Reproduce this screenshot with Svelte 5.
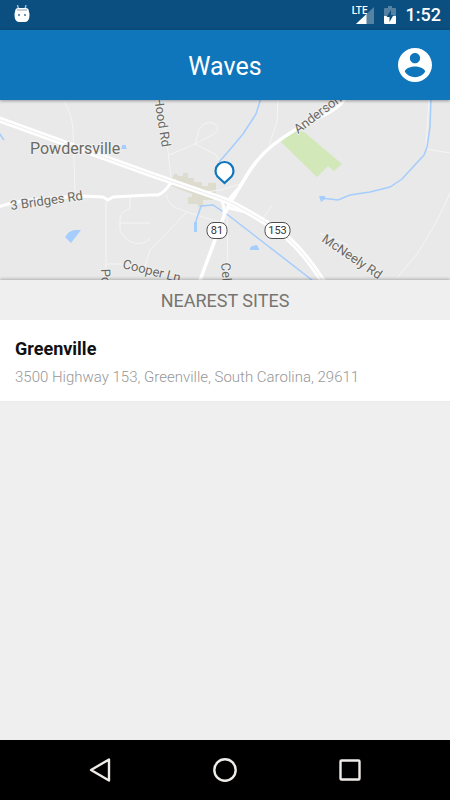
<script>
  const title = 'Waves';
  const sites = [
    { name: 'Greenville', address: '3500 Highway 153, Greenville, South Carolina, 29611' }
  ];
</script>

<div class="screen">
  <div class="status">
    <svg class="droid" width="16" height="18" viewBox="0 0 16 18" aria-hidden="true">
      <path d="M3.500 0 4.500 4M12 0 11 4" stroke="#a9c0d3" stroke-width="1.400" />
      <path d="M1.500 4.500Q2 3 4 3H12Q14 3 14.500 4.500L15.500 9Q15.500 14 14 15.500Q13 17 10 17H6Q3 17 2 15.500Q.5 14 .5 9Z" fill="#fff" />
      <path d="M3 4H13V6H3Z" fill="#c3d0dc" />
      <rect x="4" y="9" width="2" height="2" fill="#6f93b2" />
      <rect x="10" y="9" width="2" height="2" fill="#6f93b2" />
    </svg>
    <div class="indicators">
      <div class="signal">
        <span class="lte">LTE</span>
        <svg width="18" height="17" viewBox="0 0 18 17" aria-hidden="true">
          <path d="M18 0V17H0Z" fill="#5581a3" />
          <path d="M10.500 7.100V17H0Z" fill="#fff" />
        </svg>
      </div>
      <svg width="12" height="18" viewBox="0 0 12 18" aria-hidden="true">
        <path d="M4 0H8V2H11Q12 2 12 3V17Q12 18 11 18H1Q0 18 0 17V3Q0 2 1 2H4Z" fill="#5581a3" />
        <path d="M0 10H12V17Q12 18 11 18H1Q0 18 0 17Z" fill="#fff" />
        <path d="M7 4 2.500 11H5.500V16L9.500 9H7Z" fill="#0a4f7f" />
      </svg>
      <span class="time">1:52</span>
    </div>
  </div>

  <header>
    <h1>{title}</h1>
    <button class="account" aria-label="Account">
      <svg width="34" height="34" viewBox="2 2 20 20" aria-hidden="true">
        <path fill="#fff" d="M12 2C6.480 2 2 6.480 2 12s4.480 10 10 10 10-4.480 10-10S17.520 2 12 2zm0 3c1.660 0 3 1.340 3 3s-1.340 3-3 3-3-1.340-3-3 1.340-3 3-3zm0 14.200c-2.500 0-4.710-1.280-6-3.220.03-1.990 4-3.080 6-3.080 1.990 0 5.970 1.090 6 3.080-1.290 1.940-3.500 3.220-6 3.220z" />
      </svg>
    </button>
  </header>

  <div class="map">
    <svg viewBox="0 0 450 180" preserveAspectRatio="xMidYMid slice" role="img" aria-label="Map of Powdersville">
      <path fill="#d2e8b8" d="M281 42 294 29 304 32 342 64 334 71 328 66 317 77Z" />
      <path fill="#dedbcf" d="M174 74H178V76H183V73H188V78H194V82H202V86H208V83H216V93H213V100H203V107H198V104H188V97H192V94L172 86V82H176V79H172Z" />

      <g class="minor">
        <path d="M64 1Q72 14 73 30L75 92" />
        <path d="M106 101V165L103 180M106 164H128M130 97V109Q122 110 120 118V130Q124 140 134 143Q145 145 150 138M120 123H150M150 150 144 170" />
        <path d="M162 10 166 35 171 77M169 55 195 44 199 30Q203 21 213 23Q222 27 214 34L195 44 215 54 219 60" />
        <path d="M278 0 277 22 269 45M205 92 221 90 240 84M166 94Q168 103 174 107L187 112 222 123M150 150 187 112M227 105 228 180M263 118 272 106" />
        <path d="M429 0 427 30 426 49 450 53M450 93Q438 122 417 154L397 178M320 133 348 145" />
      </g>

      <g class="water">
        <path d="M261 -2 256 14 243 34 227 53 219 62" />
        <path d="M196 129 196 121 201 106 213 105 228 115 312 180" />
        <path d="M431 -2 430 27 427 47 424 55 402 79 390 87 370 92 350 95 338 100 321 98" />
        <path d="M-1 33 4 40" />
      </g>
      <path fill="#a5cdfd" d="M65 137 69 132 74 130H81L71 143ZM122 47V45H126V48H127V49H121V48ZM194 122H197V132H194ZM250 148 252 146 257 145 259 149V150H250ZM319 96H325V99L321 102 320 99Z" />

      <g class="road">
        <path stroke-width="3" d="M-2 107Q15 101 40 99T82 96L103 97 108 100 113 97 150 95 158 95Q164 93 170 84" />
        <path stroke-width="3.500" d="M199 183 225 113 230 103 247 75Q258 57 273 45Q292 30 318 18T345 -4" />
        <path stroke-width="6" d="M-2 19 150 74 222 99Q236 104 273 127Q298 142 324 183" />
        <path stroke-width="3" d="M221 99Q225 108 224 113M229 108 246 112M230 98 237 90" />
      </g>
      <path fill="none" stroke="#ececec" stroke-width="1" d="M-2 19 150 74 222 99Q236 104 273 127Q298 142 324 183" />

      <g class="label">
        <text class="town" x="30" y="54">Powdersville</text>
        <text transform="translate(11 110) rotate(-8)">3 Bridges Rd</text>
        <text transform="translate(154 -2) rotate(81)">Hood Rd</text>
        <text transform="translate(298 34) rotate(-37)">Anderson</text>
        <text transform="translate(321 141) rotate(34)">McNeely Rd</text>
        <text transform="translate(122 168) rotate(14)">Cooper Ln</text>
        <text transform="translate(101 169) rotate(88)">Po</text>
        <text transform="translate(221 163) rotate(85)">Cel</text>
      </g>

      <g class="shield">
        <rect x="207" y="122.500" width="20" height="16" rx="7" />
        <text x="217" y="134">81</text>
        <rect x="265" y="122.500" width="25" height="16" rx="7" />
        <text x="277.500" y="134">153</text>
      </g>

      <path fill="#fff" stroke="#0f76bc" stroke-width="2.200" d="M224.500 83 217.500 76.500Q215.500 74 215.500 71A9 9 0 0 1 233.500 71Q233.500 74 231.500 76.500Z" />
    </svg>
  </div>

  <main>
    <h2>NEAREST SITES</h2>
    <ul>
      {#each sites as site}
        <li>
          <strong>{site.name}</strong>
          <span>{site.address}</span>
        </li>
      {/each}
    </ul>
  </main>

  <nav aria-label="System navigation">
    <button aria-label="Back">
      <svg width="26" height="26" viewBox="0 0 26 26" aria-hidden="true"><path d="M22 2.500V23.500L4 13Z" /></svg>
    </button>
    <button aria-label="Home">
      <svg width="26" height="26" viewBox="0 0 26 26" aria-hidden="true"><circle cx="13" cy="13" r="10.700" /></svg>
    </button>
    <button aria-label="Recent apps">
      <svg width="26" height="26" viewBox="0 0 26 26" aria-hidden="true"><rect x="3.500" y="3.500" width="19" height="19" rx="1" /></svg>
    </button>
  </nav>
</div>

<style>
  :global(body) {
    margin: 0;
  }

  .screen {
    display: flex;
    flex-direction: column;
    min-height: 100vh;
    background: #efefef;
    font-family: Roboto, "Liberation Sans", sans-serif;
  }

  button {
    display: flex;
    align-items: center;
    justify-content: center;
    padding: 0;
    border: 0;
    background: none;
    cursor: pointer;
  }

  .status {
    display: flex;
    align-items: center;
    justify-content: space-between;
    height: 30px;
    padding: 0 9px 0 14px;
    background: #0a4f7f;
    color: #fff;
  }

  .droid {
    margin-bottom: 2px;
    fill: none;
  }

  .indicators {
    display: flex;
    align-items: center;
    gap: 10px;
  }

  .signal {
    display: flex;
    align-items: flex-start;
  }

  .signal svg {
    margin-left: -12px;
  }

  .lte {
    font-size: 10px;
    line-height: 8px;
    font-weight: 500;
  }

  .time {
    font-size: 18px;
    line-height: 30px;
    font-weight: 500;
  }

  header {
    position: relative;
    z-index: 1;
    display: grid;
    grid-template-columns: 34px 1fr 34px;
    align-items: center;
    height: 70px;
    padding: 0 18px;
    background: #0f76bc;
    box-shadow: 0 1px 3px rgba(0, 0, 0, 0.35);
  }

  h1 {
    grid-column: 2;
    margin: 0;
    padding-top: 4px;
    color: #fff;
    font-size: 25px;
    line-height: 32px;
    font-weight: 400;
    text-align: center;
  }

  .map {
    height: 180px;
    background: #e9e9e9;
    overflow: hidden;
  }

  .map svg {
    display: block;
    width: 100%;
    height: 100%;
  }

  .minor path {
    fill: none;
    stroke: #f5f5f5;
    stroke-width: 1;
  }

  .water path {
    fill: none;
    stroke: #a5cdfd;
    stroke-width: 1.5;
  }

  .road path {
    fill: none;
    stroke: #fff;
    stroke-linecap: round;
    stroke-linejoin: round;
  }

  .label text {
    fill: #6b6963;
    stroke: #f1f1f1;
    stroke-width: 2;
    stroke-linejoin: round;
    paint-order: stroke;
    font-size: 13px;
  }

  .label .town {
    font-size: 16px;
  }

  .shield rect {
    fill: #fff;
    stroke: #4c4c4c;
    stroke-width: 1;
  }

  .shield text {
    fill: #333;
    font-size: 11px;
    text-anchor: middle;
  }

  main {
    flex: 1;
    z-index: 1;
    box-shadow: 0 -1px 3px rgba(0, 0, 0, 0.25);
    background: #efefef;
  }

  h2 {
    margin: 0;
    padding-top: 2px;
    color: #77756f;
    font-size: 18px;
    line-height: 38px;
    font-weight: 400;
    text-align: center;
  }

  ul {
    margin: 0;
    padding: 0;
    list-style: none;
  }

  li {
    display: flex;
    flex-direction: column;
    gap: 4px;
    padding: 17px 15px 12px;
    background: #fff;
    border-bottom: 1px solid #ebebeb;
  }

  strong {
    color: #111;
    font-size: 18px;
    line-height: 24px;
    font-weight: 700;
  }

  li span {
    color: #979797;
    font-size: 15px;
    line-height: 24px;
    font-weight: 300;
  }

  nav {
    display: flex;
    justify-content: center;
    gap: 77px;
    height: 60px;
    background: #000;
  }

  nav button {
    width: 48px;
  }

  nav svg {
    fill: none;
    stroke: #efece8;
    stroke-width: 2.4;
    stroke-linejoin: round;
  }
</style>
